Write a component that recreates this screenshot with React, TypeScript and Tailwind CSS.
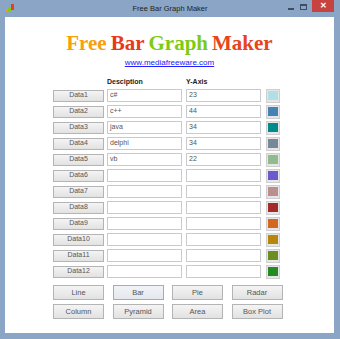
import React from 'react'

const rows = [
  { label: 'Data1', desc: 'c#', y: '23', color: '#b0e0e6' },
  { label: 'Data2', desc: 'c++', y: '44', color: '#4682b4' },
  { label: 'Data3', desc: 'java', y: '34', color: '#008b8b' },
  { label: 'Data4', desc: 'delphi', y: '34', color: '#778899' },
  { label: 'Data5', desc: 'vb', y: '22', color: '#8fbc8f' },
  { label: 'Data6', desc: '', y: '', color: '#6a5acd' },
  { label: 'Data7', desc: '', y: '', color: '#bc8f8f' },
  { label: 'Data8', desc: '', y: '', color: '#a52a2a' },
  { label: 'Data9', desc: '', y: '', color: '#d2691e' },
  { label: 'Data10', desc: '', y: '', color: '#b8860b' },
  { label: 'Data11', desc: '', y: '', color: '#6b8e23' },
  { label: 'Data12', desc: '', y: '', color: '#228b22' }
]

const charts = ['Line', 'Bar', 'Pie', 'Radar', 'Column', 'Pyramid', 'Area', 'Box Plot']

function AppIcon() {
  return (
    <svg width="9" height="10" viewBox="0 0 9 10">
      <rect x="0" y="6" width="3" height="3" fill="#e8a010" />
      <rect x="2" y="4" width="3" height="4" fill="#7ecb12" />
      <rect x="5" y="1" width="3" height="6" fill="#e8401c" />
    </svg>
  )
}

export default function App() {
  return (
    <div
      className="flex h-[339px] w-[340px] flex-col bg-[#8aa5c6] text-[#555]"
      style={{ fontFamily: '"Liberation Sans", Arial, sans-serif' }}
    >
      {/* title bar */}
      <div className="relative flex h-[17px] items-center justify-center">
        <div className="absolute left-[6px] top-[3px]">
          <AppIcon />
        </div>
        <span className="text-[7.5px] text-[#222]">Free Bar Graph Maker</span>
        <div className="absolute right-[33px] top-[4px] flex items-center gap-[6px]">
          <div className="mt-[4px] h-[2px] w-[6px] bg-[#3d4d63]" />
          <div className="h-[6px] w-[7px] border border-[#3d4d63] border-t-2" />
        </div>
        <div className="absolute right-[6px] top-0 flex h-[12px] w-[22px] items-center justify-center bg-[#c7433f] text-[8px] font-bold text-white">
          ✕
        </div>
      </div>

      {/* client area */}
      <div className="ml-[5px] mr-[6px] flex h-[316px] flex-col bg-white">
        <div
          className="mt-[13px] flex justify-center gap-[4px] text-[21px] font-bold leading-[26px]"
          style={{ fontFamily: '"Liberation Serif", "Times New Roman", serif' }}
        >
          <span className="text-[#f5a00c]">Free</span>
          <span className="text-[#e8391c]">Bar</span>
          <span className="text-[#7ecb12]">Graph</span>
          <span className="text-[#e8441c]">Maker</span>
        </div>
        <div className="mt-[2px] flex justify-center">
          <span className="text-[8px] leading-[10px] text-[#2020ff] underline">www.mediafreeware.com</span>
        </div>

        <div className="mt-[9px] flex pl-[102px] text-[7px] font-bold leading-[9px] text-[#222]">
          <span className="w-[79px]">Desciption</span>
          <span>Y-Axis</span>
        </div>

        <div className="mt-[3px] flex flex-col gap-[3px] pl-[48px]">
          {rows.map((r) => (
            <div key={r.label} className="flex h-[13px] items-center">
              <div className="flex h-[12px] w-[51px] items-center justify-center border border-[#b4b4b4] bg-gradient-to-b from-[#f4f4f4] to-[#e2e2e2] text-[7px]">
                {r.label}
              </div>
              <div className="ml-[3px] flex h-[13px] w-[75px] items-center border border-[#c8cacf] pl-[2px] text-[7px]">
                {r.desc}
              </div>
              <div className="ml-[4px] flex h-[13px] w-[75px] items-center border border-[#c8cacf] pl-[2px] text-[7px]">
                {r.y}
              </div>
              <div className="ml-[5px] flex h-[14px] w-[14px] items-center justify-center border border-[#cfcfcf] bg-[#e6e6e6]">
                <div className="h-[9px] w-[10px]" style={{ backgroundColor: r.color }} />
              </div>
            </div>
          ))}
        </div>

        <div className="mt-[7px] grid grid-cols-[51px_51px_51px_51px] gap-x-[8.5px] gap-y-[4px] pl-[48px]">
          {charts.map((c) => (
            <div
              key={c}
              className={
                c === 'Bar'
                  ? 'flex h-[15px] items-center justify-center border border-[#7eb4ea] bg-gradient-to-b from-[#f0f4f8] to-[#e4e8ec] text-[7.5px]'
                  : 'flex h-[15px] items-center justify-center border border-[#b4b4b4] bg-gradient-to-b from-[#f4f4f4] to-[#e2e2e2] text-[7.5px]'
              }
            >
              {c}
            </div>
          ))}
        </div>
      </div>
    </div>
  )
}
